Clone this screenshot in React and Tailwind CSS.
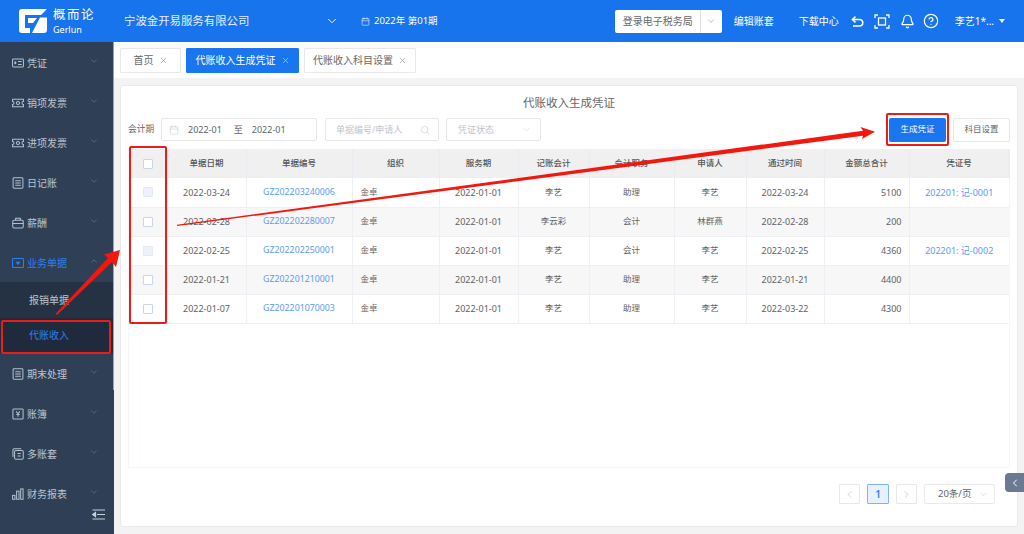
import React from "react";
import { ChevronDown, ChevronUp, ChevronLeft, ChevronRight, X, Search, Calendar, Bell, CircleHelp } from "lucide-react";

const menu = [
  { label: "凭证", icon: "voucher" },
  { label: "销项发票", icon: "ticket" },
  { label: "进项发票", icon: "ticket" },
  { label: "日记账", icon: "note" },
  { label: "薪酬", icon: "pay" },
];
const menu2 = [
  { label: "期末处理", icon: "note" },
  { label: "账簿", icon: "yen" },
  { label: "多账套", icon: "copy" },
  { label: "财务报表", icon: "bars" },
];

const rows = [
  { date: "2022-03-24", no: "GZ202203240006", acc: "李艺", job: "助理", man: "李艺", pass: "2022-03-24", sum: "5100", v: "202201: 记-0001", off: true },
  { date: "2022-02-28", no: "GZ202202280007", acc: "李云彩", job: "会计", man: "林群燕", pass: "2022-02-28", sum: "200", v: "" },
  { date: "2022-02-25", no: "GZ202202250001", acc: "李艺", job: "会计", man: "李艺", pass: "2022-02-25", sum: "4360", v: "202201: 记-0002", off: true },
  { date: "2022-01-21", no: "GZ202201210001", acc: "李艺", job: "助理", man: "李艺", pass: "2022-01-21", sum: "4400", v: "" },
  { date: "2022-01-07", no: "GZ202201070003", acc: "李艺", job: "助理", man: "李艺", pass: "2022-03-22", sum: "4300", v: "" },
];

const heads = ["单据日期", "单据编号", "组织", "服务期", "记账会计", "会计职务", "申请人", "通过时间", "金额总合计", "凭证号"];
const widths = [38, 79, 106, 87, 79, 71, 85, 72, 78, 85, 100];

const MenuIcon = ({ type, color = "#b4c2d0" }) => (
  <svg width="12" height="12" viewBox="0 0 13 13" fill="none" stroke={color} strokeWidth="1.1" className="shrink-0">
    {type === "voucher" && <><rect x="0.6" y="2.2" width="11.8" height="8.6" rx="1" /><rect x="2.6" y="4.8" width="2" height="3" fill={color} stroke="none" /><path d="M6.5 5h4M6.5 8h4" /></>}
    {type === "ticket" && <><path d="M0.6 2.5h11.8v2.4a1.6 1.6 0 000 3.2v2.4H0.6V8.1a1.6 1.6 0 000-3.2z" /><circle cx="6.5" cy="6.5" r="1.7" /></>}
    {type === "note" && <><rect x="1.2" y="0.8" width="10.6" height="11.4" rx="1" /><path d="M3.5 4h6M3.5 6.5h6M3.5 9h6" /></>}
    {type === "pay" && <><rect x="0.8" y="3.6" width="11.4" height="8.4" rx="1.4" /><path d="M4 3.6V1.4h5v2.2M0.8 7h11.4" /></>}
    {type === "doc" && <><rect x="0.6" y="1.6" width="11.8" height="9.8" rx="0.6" /><path d="M6.5 8.6L4.4 6.3a1.2 1.2 0 012.1-1 1.2 1.2 0 012.1 1z" fill={color} stroke="none" /></>}
    {type === "yen" && <><rect x="1" y="1" width="11" height="11" rx="1" /><path d="M4.5 3.6l2 2.6 2-2.6M6.5 6.2v3.4M4.7 7h3.6" /></>}
    {type === "copy" && <><rect x="2.8" y="2.6" width="9.4" height="9.6" rx="1.4" /><path d="M1 9.8V2.2A1.4 1.4 0 012.4 0.8H10" /><path d="M6 6h3.4M6 8.6h3.4" /></>}
    {type === "bars" && <><rect x="0.6" y="8" width="2.6" height="4.2" /><rect x="5" y="3.4" width="2.6" height="8.8" /><rect x="9.4" y="1" width="2.6" height="11.2" /></>}
  </svg>
);

const MenuItem = ({ label, icon, active }) => (
  <div className={`h-10 flex items-center pl-3 pr-[15px] text-[10px] shrink-0 ${active ? "text-[#2f80ed]" : "text-[#bcc7d2]"}`}>
    <MenuIcon type={icon} color={active ? "#2f80ed" : "#b4c2d0"} />
    <span className="ml-[3px] flex-1">{label}</span>
    {active ? <ChevronUp size={10} strokeWidth={1} className="text-[#8d9bad] mb-1" /> : <ChevronDown size={10} strokeWidth={1} className="text-[#8d9bad] mb-1" />}
  </div>
);

const Tab = ({ label, active, width }) => (
  <div className={`${width} h-[25px] flex items-center justify-center gap-[5px] text-[10px] border rounded-[1px] ${active ? "bg-[#1a76ee] border-[#1a76ee] text-white" : "bg-white border-[#e8e8e8] text-[#666]"}`}>
    {label}
    <X size={9} strokeWidth={1.2} />
  </div>
);

const Checkbox = ({ off }) => (
  <span className={`block w-[10px] h-[10px] mx-auto border rounded-[1px] ${off ? "bg-[#eef1f9] border-[#e6eaf5]" : "bg-white border-[#c8d4f0]"}`} />
);

export default function App() {
  return (
    <div className="relative w-[1024px] h-[534px] overflow-hidden flex flex-col bg-[#f3f3f3] text-[#606266] font-['Noto_Sans','Noto_Sans_CJK_SC',sans-serif]">
      {/* header */}
      <header className="h-[42px] shrink-0 bg-[#1874ec] text-white flex items-center text-[10px]">
        <div className="w-[124px] pl-[19px] flex items-center shrink-0">
          <svg width="29" height="25" viewBox="0 0 29 25" className="shrink-0">
            <path d="M3 0H28L22 6H6V19H11V24H3a3 3 0 01-3-3V3a3 3 0 013-3z" fill="#fff" />
            <path d="M9 9H18L14 14H9zM21 8.500H28V21a3 3 0 01-3 3H13z" fill="#fff" />
          </svg>
          <div className="ml-[5px] leading-none">
            <div className="text-[12.5px] tracking-[1.5px] h-[15px] whitespace-nowrap">概而论</div>
            <div className="text-[9px] mt-[1px]">Gerlun</div>
          </div>
        </div>
        <div className="text-[11.4px] w-[201px] shrink-0 text-[#e4efff]">宁波金开易服务有限公司</div>
        <ChevronDown size={14} strokeWidth={1.6} className="shrink-0" />
        <div className="ml-[22px] flex items-center text-[9.5px] gap-[4px] flex-1">
          <Calendar size={9} strokeWidth={1.4} />
          2022年 第01期
        </div>
        <div className="w-[107px] h-[23px] bg-white rounded-[2px] flex items-center text-[#666] text-[10px] shrink-0">
          <span className="flex-1 pl-2 whitespace-nowrap">登录电子税务局</span>
          <span className="w-[22px] h-full border-l border-[#ddd] flex items-center justify-center">
            <ChevronDown size={10} strokeWidth={1} />
          </span>
        </div>
        <span className="ml-[12px] w-[65px] shrink-0">编辑账套</span>
        <span className="w-[52px] shrink-0">下载中心</span>
        <svg width="13" height="11" viewBox="0 0 13 11" fill="none" stroke="#fff" strokeWidth="1.5" className="shrink-0">
          <path d="M1.500 3.500H8.500a3 3 0 010 6.500H2" />
          <path d="M4.500 0.600L1.400 3.500L4.500 6.400" />
        </svg>
        <svg width="16" height="15" viewBox="0 0 16 15" fill="none" stroke="#fff" strokeWidth="1.3" className="ml-[10px] shrink-0">
          <path d="M1 4V1h3M12 1h3v3M15 11v3h-3M4 14H1v-3" />
          <rect x="4.500" y="4" width="7" height="7" />
        </svg>
        <Bell size={15} strokeWidth={1.9} className="ml-[10px] shrink-0" />
        <CircleHelp size={16} strokeWidth={1.8} className="ml-[8px] shrink-0" />
        <span className="ml-[16px] whitespace-nowrap">李艺1*...</span>
        <span className="ml-[5px] mr-[19px] w-0 h-0 border-x-[3px] border-x-transparent border-t-[4px] border-t-white" />
      </header>

      <div className="flex-1 flex min-h-0">
        {/* sidebar */}
        <aside className="relative w-[114px] shrink-0 bg-[#2f3f55]">
          <div className="h-[452px] pt-[1px] flex flex-col">
            {menu.map((m) => <MenuItem key={m.label} {...m} />)}
            <MenuItem label="业务单据" icon="doc" active />
            <div className="h-[72px] shrink-0 bg-[#253243] text-[10px] -mt-px">
              <div className="h-[36px] pl-[29px] flex items-center text-[#bcc7d2]">报销单据</div>
              <div className="h-[34px] pl-[29px] flex items-center text-[#2f80ed] bg-[#1f2b3c]">代账收入</div>
            </div>
            {menu2.map((m) => <MenuItem key={m.label} {...m} />)}
          </div>
          <div className="absolute right-0 top-0 w-[1.5px] h-[348px] bg-[#9aa5b1]" />
          <svg width="13" height="11" viewBox="0 0 13 11" fill="none" stroke="#c6d0da" strokeWidth="1.2" className="absolute left-[92px] top-[467px]">
            <path d="M0.500 1H13M5 5.500H13M0.500 10H13" />
            <path d="M3.500 3.500L0.800 5.500L3.500 7.500z" fill="#c6d0da" />
          </svg>
        </aside>

        <main className="flex-1 min-w-0 flex flex-col">
          {/* tabs */}
          <div className="h-[36px] shrink-0 bg-white flex items-center gap-[5px] pl-[6px] pt-[1px]">
            <Tab label="首页" width="w-[61px]" />
            <Tab label="代账收入生成凭证" active width="w-[113px]" />
            <Tab label="代账收入科目设置" width="w-[112px]" />
          </div>

          {/* card */}
          <div className="relative ml-[6px] mr-[6px] mt-[7px] h-[442px] bg-white border border-[#e9e9e9] rounded-[3px] px-[7px]">
            <div className="h-[32px] pt-[9px] text-center text-[11.5px] leading-[16px] text-[#666]">代账收入生成凭证</div>
            <div className="h-[23px] flex items-center text-[9px]">
              <span className="w-[33px] shrink-0 text-[8.7px]">会计期</span>
              <div className="w-[156px] h-[23px] border border-[#e6e6e6] rounded-[2px] flex items-center shrink-0 pt-[1px]">
                <Calendar size={10} strokeWidth={1} className="ml-[7px] text-[#b8b8b8]" />
                <span className="ml-[9px] text-[9px]">2022-01</span>
                <span className="ml-[12px] text-[9px]">至</span>
                <span className="ml-[9px] text-[9px]">2022-01</span>
              </div>
              <div className="ml-[8px] w-[114px] h-[23px] border border-[#e6e6e6] rounded-[2px] flex items-center pl-[10px] pr-[8px] text-[#c0c4cc] shrink-0">
                <span className="flex-1">单据编号/申请人</span>
                <Search size={10} strokeWidth={1.2} />
              </div>
              <div className="ml-[7px] w-[95px] h-[23px] border border-[#e6e6e6] rounded-[2px] flex items-center pl-[11px] pr-[8px] text-[#c0c4cc] shrink-0">
                <span className="flex-1">凭证状态</span>
                <ChevronDown size={11} strokeWidth={1} />
              </div>
              <div className="flex-1" />
              <button className="w-[57px] h-[24px] bg-[#1a76ee] text-white rounded-[2px] text-[8.5px]">生成凭证</button>
              <button className="ml-[7px] w-[57px] h-[24px] bg-white border border-[#e6e6e6] rounded-[2px] text-[8.5px] text-[#666]">科目设置</button>
            </div>

            {/* table */}
            <div className="mt-[8px] h-[319px] border-b border-x border-[#f2f7fe]">
              <table className="w-full table-fixed border-collapse text-[8.5px]">
                <colgroup>
                  {widths.map((w, i) => <col key={i} style={{ width: w }} />)}
                </colgroup>
                <thead>
                  <tr className="h-[29px] bg-[#f0f0f0] text-[#555] font-medium">
                    <th className="border-r border-[#e8ebf2]"><Checkbox /></th>
                    {heads.map((h) => <th key={h} className="font-medium border-r border-[#e8ebf2]">{h}</th>)}
                  </tr>
                </thead>
                <tbody>
                  {rows.map((r, i) => (
                    <tr key={r.no} className={`h-[29px] border-b border-[#eeeff3] text-center ${i % 2 ? "bg-[#f7f7f7]" : "bg-white"}`}>
                      <td className="border-r border-[#eeeff3]"><Checkbox off={r.off} /></td>
                      <td className="border-r border-[#eeeff3] text-[9px]">{r.date}</td>
                      <td className="border-r border-[#eeeff3] text-[#5b9bf3] text-[8.8px]">{r.no}</td>
                      <td className="border-r border-[#eeeff3] text-left pl-2">金卓</td>
                      <td className="border-r border-[#eeeff3] text-[9px]">2022-01-01</td>
                      <td className="border-r border-[#eeeff3]">{r.acc}</td>
                      <td className="border-r border-[#eeeff3]">{r.job}</td>
                      <td className="border-r border-[#eeeff3]">{r.man}</td>
                      <td className="border-r border-[#eeeff3] text-[9px]">{r.pass}</td>
                      <td className="border-r border-[#eeeff3] text-right pr-[7px] text-[9px]">{r.sum}</td>
                      <td className="text-[#5b9bf3] text-[9px]">{r.v}</td>
                    </tr>
                  ))}
                </tbody>
              </table>
            </div>

            {/* pagination */}
            <div className="mt-[16px] flex items-center justify-end pr-[15px]">
              <span className="w-[21px] h-[20px] border border-[#e8e8e8] rounded-[1px] flex items-center justify-center text-[#b5b9c0]"><ChevronLeft size={11} strokeWidth={1.5} /></span>
              <span className="ml-[7px] w-[22px] h-[20px] border border-[#7fb3f7] bg-[#e8f2fe] rounded-[1px] flex items-center justify-center text-[10px] font-semibold text-[#2f80ed]">1</span>
              <span className="ml-[7px] w-[21px] h-[20px] border border-[#e8e8e8] rounded-[1px] flex items-center justify-center text-[#b5b9c0]"><ChevronRight size={11} strokeWidth={1.5} /></span>
              <div className="ml-[7px] w-[71px] h-[20px] border border-[#eaeaea] rounded-[2px] flex items-center pl-[13px] pr-[5px] text-[9.5px]">
                <span className="flex-1">20条/页</span>
                <ChevronDown size={11} strokeWidth={1} className="text-[#bbb]" />
              </div>
            </div>
          </div>
        </main>
      </div>

      {/* collapse handle */}
      <div className="absolute left-[1005px] top-[473px] w-[19px] h-[19px] bg-[#6b7a90] rounded-l-[4px] flex items-center justify-center text-white">
        <ChevronLeft size={12} strokeWidth={2} />
      </div>

      {/* red annotations */}
      <div className="absolute left-[129px] top-[146px] w-[38px] h-[178px] border-2 border-[#ee1c16] rounded-[2px]" />
      <div className="absolute left-[1px] top-[320px] w-[110px] h-[34px] border-2 border-[#ee1c16] rounded-[2px]" />
      <div className="absolute left-[886px] top-[113px] w-[63px] h-[33px] border-2 border-[#ee1c16] rounded-[2px]" />
      <svg width="1024" height="534" viewBox="0 0 1024 534" className="absolute left-0 top-0 pointer-events-none">
        <path d="M177 224.800L863 130.800L860.500 127L875 131.700L862 139L863 135.800L177 226z" fill="#f3180f" />
        <path d="M55.500 314L108 258L104 254.500L120 250L116 267L112 262L57 315z" fill="#f3180f" />
      </svg>
    </div>
  );
}
